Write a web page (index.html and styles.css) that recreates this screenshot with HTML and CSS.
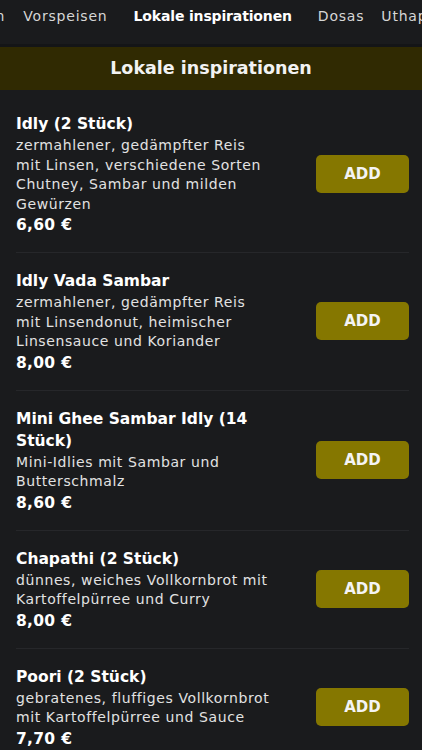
FILE: index.html
```html
<!DOCTYPE html>
<html lang="de">
<head>
    <meta charset="UTF-8">
    <meta name="viewport" content="width=device-width, initial-scale=1.0">
    <link rel="stylesheet" href="styles.css">
</head>
<body>
    <nav class="tabs">
        <span class="tab">Hauptgerichten</span>
        <span class="tab">Vorspeisen</span>
        <span class="tab active">Lokale inspirationen</span>
        <span class="tab">Dosas</span>
        <span class="tab">Uthappam</span>
    </nav>

    <h2 class="section-title">Lokale inspirationen</h2>

    <div class="menu-list">
        <div class="menu-item">
            <div class="item-info">
                <h3>Idly (2 Stück)</h3>
                <p>zermahlener, gedämpfter Reis mit Linsen, verschiedene Sorten Chutney, Sambar und milden Gewürzen</p>
                <span class="price">6,60 €</span>
            </div>
            <button class="add-btn">ADD</button>
        </div>
        <div class="menu-item">
            <div class="item-info">
                <h3>Idly Vada Sambar</h3>
                <p>zermahlener, gedämpfter Reis mit Linsendonut, heimischer Linsensauce und Koriander</p>
                <span class="price">8,00 €</span>
            </div>
            <button class="add-btn">ADD</button>
        </div>
        <div class="menu-item">
            <div class="item-info">
                <h3>Mini Ghee Sambar Idly (14 Stück)</h3>
                <p>Mini-Idlies mit Sambar und Butterschmalz</p>
                <span class="price">8,60 €</span>
            </div>
            <button class="add-btn">ADD</button>
        </div>
        <div class="menu-item">
            <div class="item-info">
                <h3>Chapathi (2 Stück)</h3>
                <p>dünnes, weiches Vollkornbrot mit Kartoffelpürree und Curry</p>
                <span class="price">8,00 €</span>
            </div>
            <button class="add-btn">ADD</button>
        </div>
        <div class="menu-item">
            <div class="item-info">
                <h3>Poori (2 Stück)</h3>
                <p>gebratenes, fluffiges Vollkornbrot mit Kartoffelpürree und Sauce</p>
                <span class="price">7,70 €</span>
            </div>
            <button class="add-btn">ADD</button>
        </div>
    </div>
</body>
</html>
```

FILE: styles.css
```css
body {
    margin: 0;
    background-color: #1a1b1d;
    color: #ececec;
    font-family: "DejaVu Sans", sans-serif;
    overflow: hidden;
}

.tabs {
    display: flex;
    gap: 26px;
    height: 36px;
    padding-top: 8px;
    align-items: flex-start;
    margin-left: -115px;
    white-space: nowrap;
    overflow: hidden;
    border-bottom: 3px solid #141517;
}

.tab {
    font-size: 14px;
    line-height: 16px;
    letter-spacing: 0.8px;
    color: #d6d6d6;
}

.tab.active {
    font-weight: bold;
    letter-spacing: -0.15px;
    color: #ffffff;
}

.tab:first-child {
    margin-right: -8px;
}

.tab:nth-child(4) {
    margin-right: -9px;
}

.section-title {
    margin: 0;
    height: 43px;
    line-height: 43px;
    background-color: #302a02;
    text-align: center;
    font-size: 17.5px;
    color: #f2f2f2;
}

.menu-list {
    margin: 0 13px 0 16px;
    padding-top: 6px;
}

.menu-item {
    display: flex;
    align-items: center;
    justify-content: space-between;
    padding: 17px 0;
    border-bottom: 1px solid #26272a;
}

.item-info {
    width: 256px;
}

.item-info h3 {
    margin: 0 0 1px 0;
    font-size: 15.5px;
    line-height: 22px;
    color: #ffffff;
}

.item-info p {
    margin: 0;
    font-size: 14px;
    letter-spacing: 0.6px;
    line-height: 19.5px;
    color: #e2e2e2;
}

.price {
    display: block;
    margin-top: 1px;
    font-weight: bold;
    font-size: 15.5px;
    letter-spacing: 0.3px;
    line-height: 20px;
    color: #ffffff;
}

.add-btn {
    width: 93px;
    height: 38px;
    background-color: #857700;
    border: none;
    border-radius: 5px;
    color: #f4f4f4;
    font-family: inherit;
    font-weight: bold;
    font-size: 15px;
}
```
